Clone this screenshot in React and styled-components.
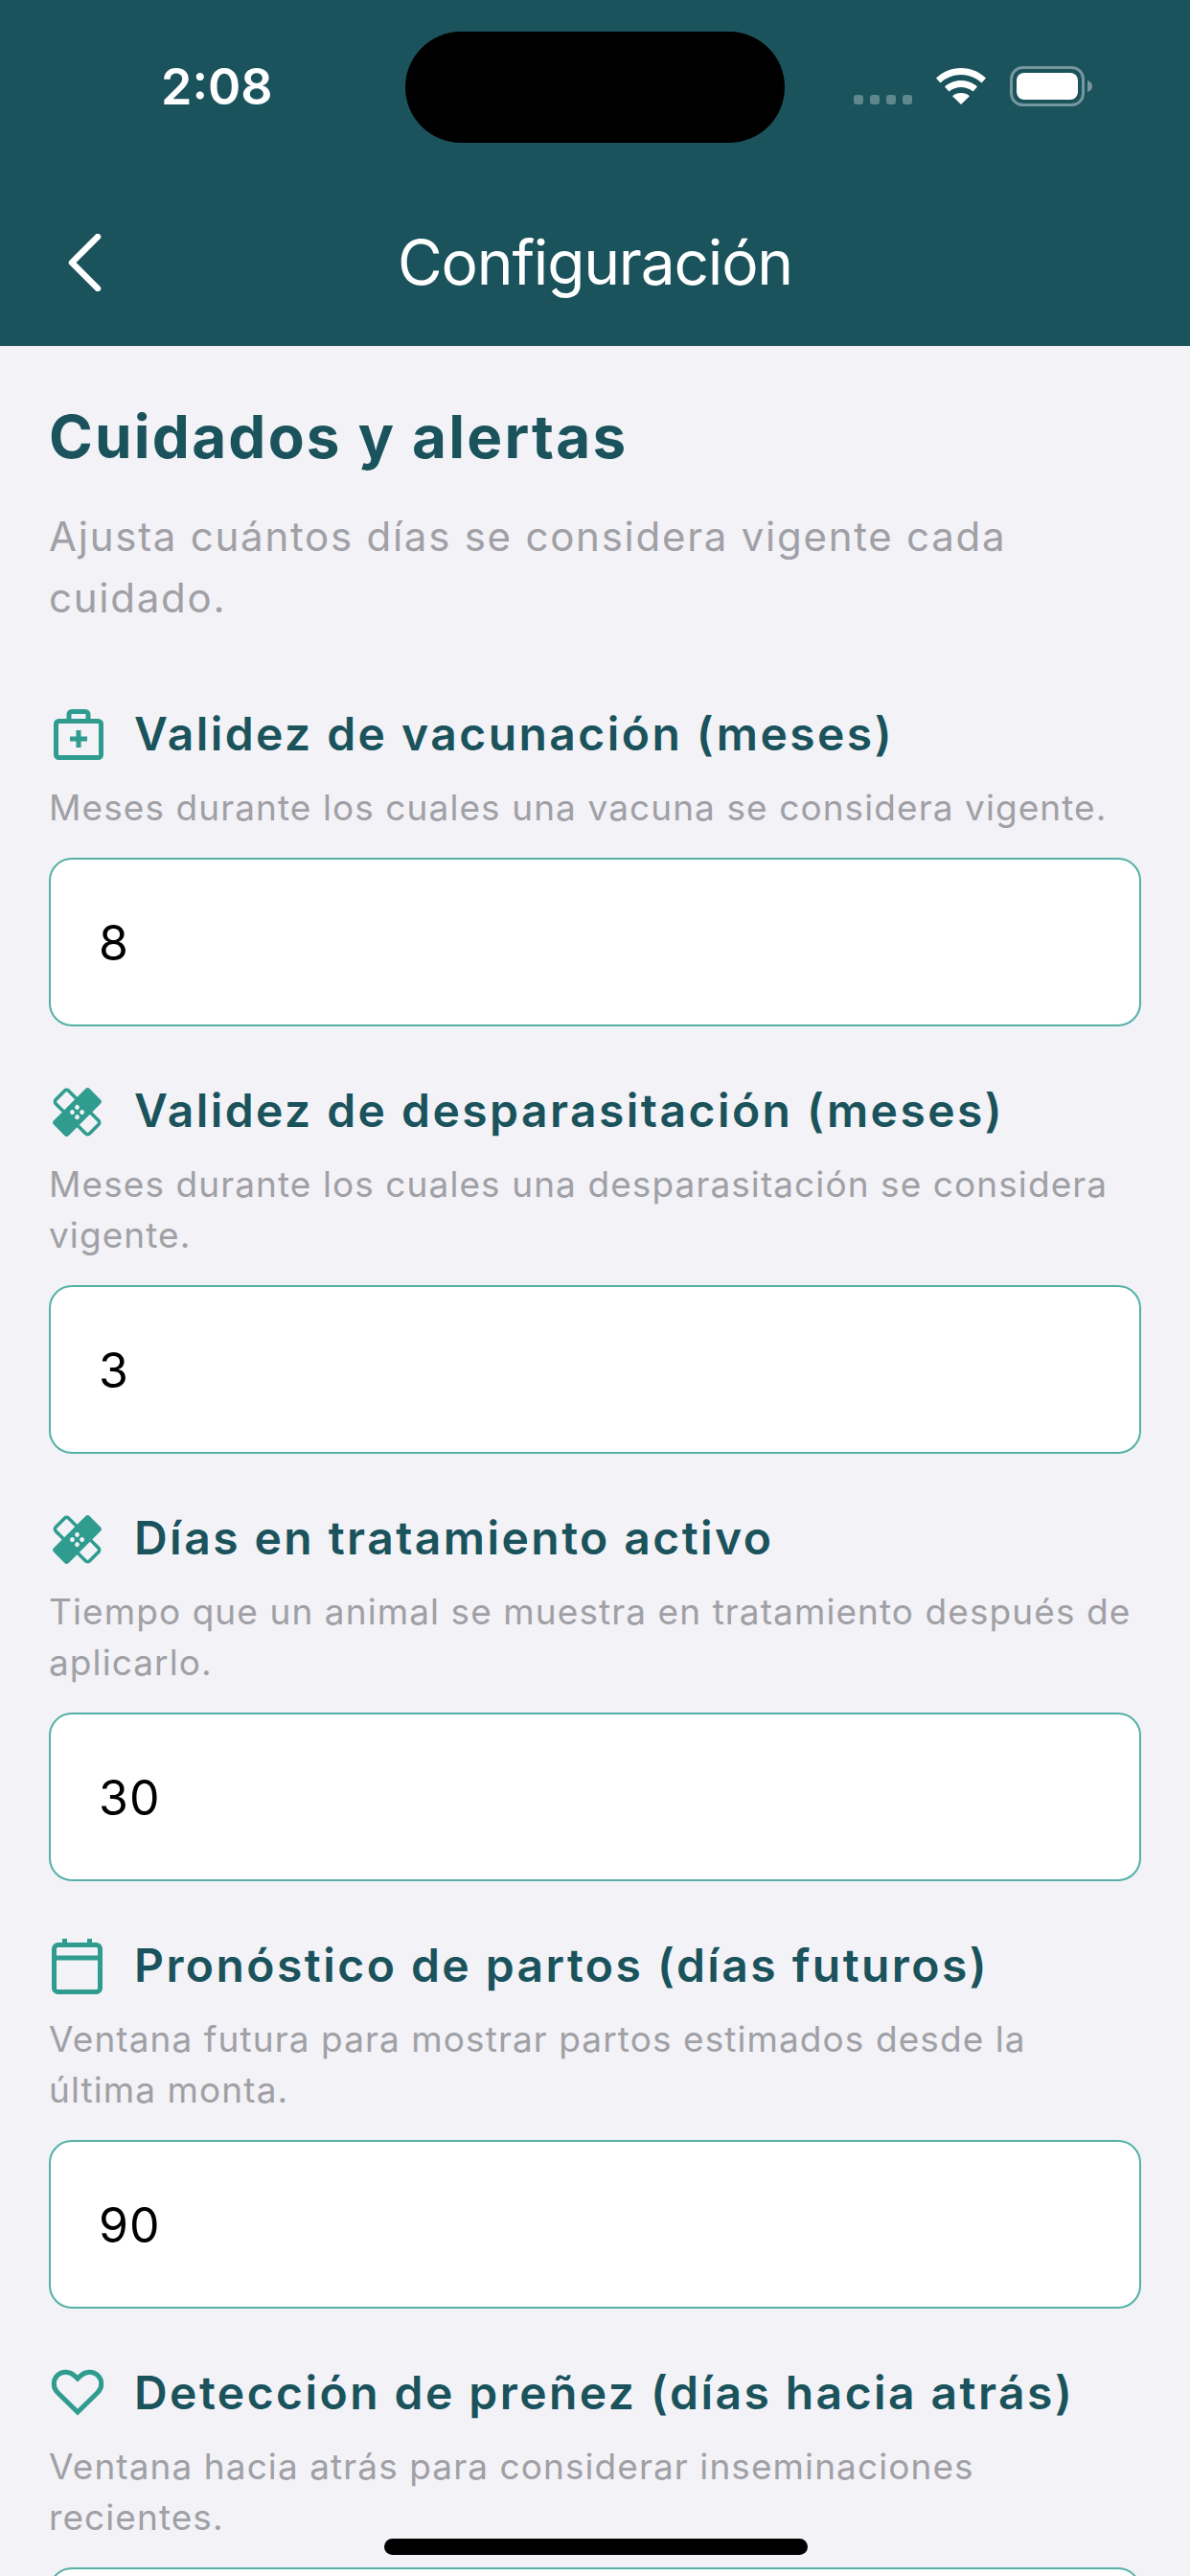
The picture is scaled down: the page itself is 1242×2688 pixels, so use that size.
import * as React from 'react';
import styled, { createGlobalStyle } from 'styled-components';

const Global = createGlobalStyle`
    html, body {
        margin: 0;
        padding: 0;
        background: #f2f2f7;
    }
    * {
        box-sizing: border-box;
    }
`;

const Screen = styled.div`
    position: relative;
    width: 1242px;
    height: 2688px;
    overflow: hidden;
    background: #f2f2f7;
    font-family: Inter, "Noto Sans", sans-serif;
`;

const Header = styled.header`
    height: 361px;
    background: #1b535c;
    color: #fff;
`;

const StatusBar = styled.div`
    display: grid;
    grid-template-columns: 423px 396px 1fr;
    height: 149px;
    padding-top: 33px;
`;

const Time = styled.div`
    font-size: 52px;
    font-weight: 600;
    line-height: 116px;
    padding-left: 168px;
`;

const Island = styled.div`
    height: 116px;
    border-radius: 58px;
    background: #000;
`;

const StatusIcons = styled.div`
    display: flex;
    align-items: flex-start;
    padding: 36px 0 0 72px;
`;

const Dots = styled.div`
    display: flex;
    gap: 7px;
    margin: 30px 24px 0 0;
`;

const Dot = styled.span`
    width: 10px;
    height: 10px;
    border-radius: 3px;
    background: rgba(255, 255, 255, 0.3);
`;

const Battery = styled.svg`
    margin-left: 24px;
`;

const NavBar = styled.nav`
    display: grid;
    grid-template-columns: 1fr auto 1fr;
    align-items: center;
    height: 174px;
    margin-top: 38px;
    padding-left: 70px;
`;

const NavTitle = styled.h1`
    margin: 0 0 0 -70px;
    font-size: 64px;
    font-weight: 400;
    line-height: 80px;
    letter-spacing: -1.2px;
`;

const Content = styled.main`
    padding: 59px 51px 0;
`;

const Title = styled.h2`
    margin: 0;
    color: #1b535c;
    font-size: 62px;
    font-weight: 700;
    line-height: 72px;
    letter-spacing: 2.2px;
`;

const Intro = styled.p`
    margin: 36px 0 0;
    color: #a0a0a5;
    font-size: 42px;
    line-height: 64px;
    letter-spacing: 1.75px;
`;

const Field = styled.section`
    margin-top: ${(props) => (props.first ? '80px' : '58px')};
`;

const Label = styled.div`
    display: flex;
    align-items: center;
    gap: 31px;
    height: 60px;
    color: #1b535c;
    font-size: 48px;
    font-weight: 600;
    letter-spacing: 2.45px;

    svg {
        margin-left: 2px;
    }
`;

const LabelText = styled.span`
    margin-top: -2px;
`;

const Hint = styled.p`
    margin: 20px 0 26px;
    color: #a0a0a5;
    font-size: 37px;
    line-height: 53px;
    letter-spacing: 1.08px;
`;

const Input = styled.input`
    display: block;
    width: 100%;
    height: 176px;
    padding: 2px 50px 0;
    border: 2px solid #55b0a6;
    border-radius: 24px;
    outline: none;
    background: #fff;
    color: #000;
    font-family: inherit;
    font-size: 50px;
    letter-spacing: 1px;
`;

const HomeBar = styled.div`
    position: absolute;
    left: 401px;
    bottom: 22px;
    width: 442px;
    height: 17px;
    border-radius: 9px;
    background: #000;
`;

const teal = '#2f9c8f';

function BagIcon() {
    return (
        <svg width="56" height="58" viewBox="0 0 56 58" fill="none" stroke={teal} strokeWidth="5">
            <rect x="5.500" y="15.500" width="47" height="38" rx="3" />
            <path d="M19 15V8.500a3 3 0 0 1 3-3h14a3 3 0 0 1 3 3V15" />
            <path d="M29 25v18M20 34h18" />
        </svg>
    );
}

function BandageIcon() {
    return (
        <svg width="56" height="56" viewBox="0 0 56 56" fill="none">
            <g transform="translate(27.500 29.500) rotate(-45)">
                <rect x="-9.500" y="-25" width="19" height="50" rx="3" stroke={teal} strokeWidth="3.500" />
                <rect x="-26.500" y="-11" width="53" height="22" rx="3" fill={teal} />
                <circle cx="-3.600" cy="-3.600" r="2.400" fill="#f2f2f7" />
                <circle cx="3.600" cy="-3.600" r="2.400" fill="#f2f2f7" />
                <circle cx="-3.600" cy="3.600" r="2.400" fill="#f2f2f7" />
                <circle cx="3.600" cy="3.600" r="2.400" fill="#f2f2f7" />
            </g>
        </svg>
    );
}

function CalendarIcon() {
    return (
        <svg width="56" height="60" viewBox="0 0 56 60" fill="none" stroke={teal} strokeWidth="5">
            <rect x="3.500" y="8.500" width="48" height="49" rx="4" />
            <path d="M3 22h49" />
            <path d="M14.500 2v8M40.500 2v8" />
        </svg>
    );
}

function HeartIcon() {
    return (
        <svg width="56" height="50" viewBox="0 0 56 50" fill="none" stroke={teal} strokeWidth="5">
            <path d="M28 45 7 24.500C2 19.500 2 11.500 7 6.500 12 1.800 20 2.200 25 7.200L28 10l3-2.800C36 2.200 44 1.800 49 6.500 54 11.500 54 19.500 49 24.500z" />
        </svg>
    );
}

const fields = [
    { icon: <BagIcon />, label: 'Validez de vacunación (meses)', hint: 'Meses durante los cuales una vacuna se considera vigente.', value: '8' },
    { icon: <BandageIcon />, label: 'Validez de desparasitación (meses)', hint: 'Meses durante los cuales una desparasitación se considera vigente.', value: '3' },
    { icon: <BandageIcon />, label: 'Días en tratamiento activo', hint: 'Tiempo que un animal se muestra en tratamiento después de aplicarlo.', value: '30' },
    { icon: <CalendarIcon />, label: 'Pronóstico de partos (días futuros)', hint: 'Ventana futura para mostrar partos estimados desde la última monta.', value: '90' },
    { icon: <HeartIcon />, label: 'Detección de preñez (días hacia atrás)', hint: 'Ventana hacia atrás para considerar inseminaciones recientes.', value: '60' },
];

export default function App() {
    return (
        <Screen>
            <Global />
            <Header>
                <StatusBar>
                    <Time>2:08</Time>
                    <Island />
                    <StatusIcons>
                        <Dots>
                            <Dot />
                            <Dot />
                            <Dot />
                            <Dot />
                        </Dots>
                        <svg width="54" height="40" viewBox="0 0 54 40" fill="#fff">
                            <path d="M27 2c10 0 19 4 26 10.500l-4.500 5C42.500 12 35 9 27 9S11.500 12 5.500 17.500l-4.500-5C8 6 17 2 27 2z" />
                            <path d="M27 15c6.500 0 12.500 2.500 17 6.500L39.500 26.500C36 23.500 31.500 22 27 22s-9 1.500-12.500 4.500L10 21.500C14.500 17.500 20.500 15 27 15z" />
                            <path d="M27 28c3.500 0 6.500 1 9 3.200L27 40l-9-8.800C20.500 29 23.500 28 27 28z" />
                        </svg>
                        <Battery width="86" height="42" viewBox="0 0 86 42" fill="none">
                            <rect x="1.500" y="1.500" width="75" height="39" rx="12" stroke="rgba(255,255,255,0.4)" strokeWidth="3" />
                            <rect x="7" y="7" width="64" height="28" rx="8" fill="#fff" />
                            <path d="M81 15c3 1 5 3 5 6s-2 5-5 6z" fill="rgba(255,255,255,0.4)" />
                        </Battery>
                    </StatusIcons>
                </StatusBar>
                <NavBar>
                    <svg width="36" height="60" viewBox="0 0 36 60" fill="none" stroke="#fff" strokeWidth="6.500" strokeLinecap="round" strokeLinejoin="round">
                        <path d="M32 3 5 30l27 27" />
                    </svg>
                    <NavTitle>Configuración</NavTitle>
                </NavBar>
            </Header>
            <Content>
                <Title>Cuidados y alertas</Title>
                <Intro>Ajusta cuántos días se considera vigente cada cuidado.</Intro>
                {fields.map((f, i) => (
                    <Field key={f.label} first={i === 0}>
                        <Label>
                            {f.icon}
                            <LabelText>{f.label}</LabelText>
                        </Label>
                        <Hint>{f.hint}</Hint>
                        <Input readOnly value={f.value} />
                    </Field>
                ))}
            </Content>
            <HomeBar />
        </Screen>
    );
}
